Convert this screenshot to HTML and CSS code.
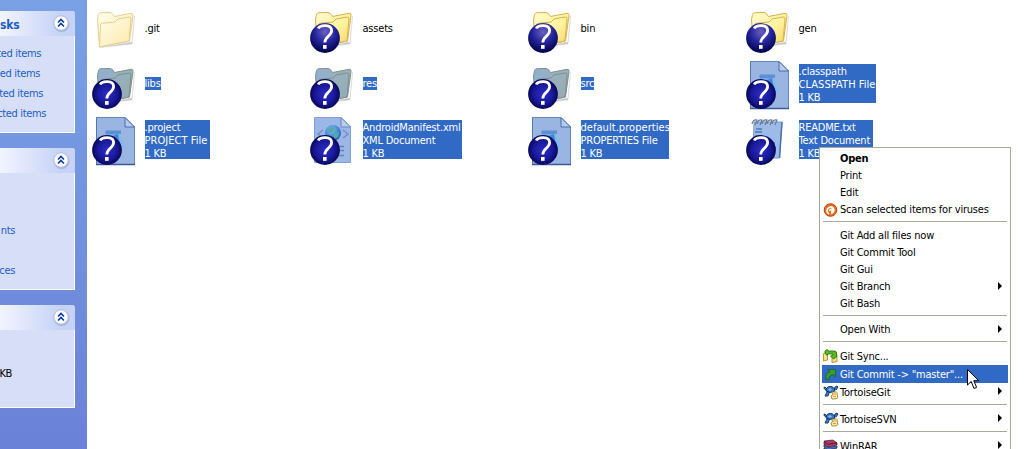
FILE: index.html
```html
<!DOCTYPE html>
<html lang="en">
<head>
<meta charset="utf-8">
<title>Explorer</title>
<link rel="stylesheet" href="styles.css">
</head>
<body>
<svg class="defs" width="0" height="0" aria-hidden="true">
  <defs>
    <linearGradient id="gFold" x1="0" y1="0" x2="1" y2="1"><stop offset="0" stop-color="#fffbd0"/><stop offset=".5" stop-color="#fff3a0"/><stop offset="1" stop-color="#f8d468"/></linearGradient>
    <linearGradient id="gPale" x1="0" y1="0" x2="1" y2="1"><stop offset="0" stop-color="#fffdec"/><stop offset="1" stop-color="#fde9ac"/></linearGradient>
    <linearGradient id="gSel" x1="0" y1="0" x2="1" y2="1"><stop offset="0" stop-color="#8fb0d4"/><stop offset=".5" stop-color="#98b0b8"/><stop offset="1" stop-color="#93a9b2"/></linearGradient>
    <radialGradient id="gBadge" cx=".5" cy=".5" r=".52"><stop offset="0" stop-color="#2c2cc4"/><stop offset=".6" stop-color="#1a1a9c"/><stop offset="1" stop-color="#050553"/></radialGradient>
    <radialGradient id="gBadgeLight" cx=".5" cy=".3" r=".65"><stop offset="0" stop-color="#6a60c0"/><stop offset=".55" stop-color="#24249a"/><stop offset="1" stop-color="#050553"/></radialGradient>
    <radialGradient id="gGlobe" cx=".4" cy=".3" r=".7"><stop offset="0" stop-color="#7cc0ee"/><stop offset="1" stop-color="#2463bd"/></radialGradient>
    <radialGradient id="gBtn" cx=".5" cy=".5" r=".5"><stop offset=".7" stop-color="#fff"/><stop offset="1" stop-color="#e8ecf8"/></radialGradient>
    <g id="mark"><path d="M10.200 28.500C12 24.800 23.600 23.800 23.600 30.500C23.600 36 16.800 36.500 16.800 42.500" fill="none" stroke="#fff" stroke-width="2.800"/><rect x="15" y="45" width="3.600" height="3.800" fill="#fff"/></g>
    <g id="badge"><circle cx="17" cy="38" r="14.900" fill="url(#gBadge)"/><use href="#mark"/></g>
    <g id="badgeLight"><circle cx="17" cy="38" r="14.900" fill="url(#gBadgeLight)"/><use href="#mark"/></g>
    <g id="folderShape">
      <path d="M10 47.500L42 42L44.500 16L42 44Z" fill="#777" stroke="#8886" opacity=".4"/>
      <path d="M7.500 20L8.500 14.500Q9 12.800 11 12.700L20 12.500Q22.500 12.500 24.500 16.500L41 13.300Q43.300 13 43 15.500L39.500 41L9.500 46.800Z"/>
      <path d="M10.500 25.500Q10.500 23.500 12.500 23.300L25 22L28 19L39 17Q41.200 17 41 19L39 41L9.500 46.800Z"/>
    </g>
    <g id="docShape">
      <path d="M6.500 5.500H35L44.500 15V52.500H6.500Z" fill="#9ab5e2" stroke="#6587bd"/>
      <path d="M6.500 52.500V5.500" stroke="#5277ab"/><path d="M6 52.500H45" stroke="#385b98" stroke-width="1.500"/>
      <path d="M35 5.500V15H44.500Z" fill="#b5ccef" stroke="#4a6ca5"/>
      <path d="M15.500 18.500H31V22H15.500Z" fill="#5b90d6"/><path d="M16 22H29L32 35H16Z" fill="#78a8e2"/><path d="M29 21L35 35L31 36L28 24Z" fill="#7cbcee"/><path d="M18 26L28 22L30 34H18Z" fill="#3f85d6"/>
    </g>
    <symbol id="folder" viewBox="0 0 50 56"><use href="#folderShape" fill="url(#gFold)" stroke="#d9b34b"/><use href="#badgeLight"/></symbol>
    <symbol id="folderPlain" viewBox="0 0 50 56"><use href="#folderShape" fill="url(#gPale)" stroke="#e7ce8d"/></symbol>
    <symbol id="folderSel" viewBox="0 0 50 56"><use href="#folderShape" fill="url(#gSel)" stroke="#82908c"/><use href="#badge"/></symbol>
    <symbol id="doc" viewBox="0 0 50 56"><use href="#docShape"/><use href="#badge"/></symbol>
    <symbol id="xml" viewBox="0 0 50 56">
      <path d="M6.500 5.500H33L42.500 15V50.500H6.500Z" fill="#9cb7e7" stroke="#7ea0d9"/><path d="M33 5.500V15H42.500Z" fill="#b8ceef" stroke="#6488c0"/>
      <path d="M15 18L10 22L15 26M35 18L40 22L35 26" fill="none" stroke="#7391c0" stroke-width="1.500"/>
      <circle cx="25" cy="21" r="8" fill="url(#gGlobe)"/><path d="M20 17Q24 13 27 17L24 20Q20 22 20 17M26 21L31 20L30 25L26 27Z" fill="#55a9a3"/>
      <path d="M28 34.500H36M28 38.500H36M28 43.500H36" stroke="#6384b9" stroke-width="1.500"/><use href="#badge"/></symbol>
    <symbol id="txt" viewBox="0 0 50 56">
      <path d="M10 10H38L35.500 46H9Z" fill="#9dbbe9" stroke="#7799cf"/><path d="M38 10L35.500 46" stroke="#4f72a4" stroke-width="1.500"/>
      <path d="M12 17H18M11 20H18M11 24H18M25 31H31M25 36H32M25 41H30" stroke="#527bb5" stroke-width="1.300"/>
      <path d="M8 12Q9 7 13 8L11 13M13 12Q14 7 18 8L16 13M18 12Q19 7 23 8L21 13M23 12Q24 7 28 8L26 13M28 12Q29 7 33 8L31 13" fill="none" stroke="#6a7c95" stroke-width="1.200"/><use href="#badge"/></symbol>
    <symbol id="chev" viewBox="0 0 18 18"><circle cx="9.500" cy="10" r="8" fill="#8795c4" opacity=".5"/><circle cx="9" cy="9" r="7.300" fill="url(#gBtn)" stroke="#b5bdd9"/><path d="M6 8.500L9 5.500L12 8.500M6 12.500L9 9.500L12 12.500" fill="none" stroke="#0a3a9c" stroke-width="1.600"/></symbol>
    <symbol id="tortoise" viewBox="0 0 16 16">
      <path d="M3 6L1.500 5Q0 3 2 3L4 5M4 8L2 12H5L6.500 8M11 6L12 3Q14.500 1 15 3L13 6" fill="#3f78bd" stroke="#143f76"/>
      <path d="M3 7Q3 2.500 7.500 2.500Q11 2.500 12 7Q7 10 3 7Z" fill="#3479c4" stroke="#0b2c5e"/><path d="M5 5.500L7 4L9 5.500L7 7Z" fill="#84bcee"/>
      <path d="M9 8H13.500Q15 8.500 14 10L15 13.500Q14 15.300 9 15L8 12L9.500 11Z" fill="#fbeab0" stroke="#b08d3a"/><path d="M10 10H13M10 12.500H13" stroke="#c8a64c"/>
    </symbol>
  </defs>
</svg>
<div class="explorer">
  <aside class="tasks">
    <section class="panel panel-a">
      <header><b>sks</b><svg class="chev"><use href="#chev"/></svg></header>
      <ul><li class="w1">ted items</li><li class="w2">ed items</li><li class="w3">ted items</li><li class="w4">cted items</li></ul>
    </section>
    <section class="panel panel-b">
      <header><svg class="chev"><use href="#chev"/></svg></header>
      <ul><li></li><li></li><li class="w5">nts</li><li></li><li class="w5">ces</li></ul>
    </section>
    <section class="panel panel-c">
      <header><svg class="chev"><use href="#chev"/></svg></header>
      <ul><li></li><li class="w6">KB</li></ul>
    </section>
  </aside>
  <main class="files">
    <div class="file"><svg><use href="#folderPlain"/></svg><p>.git</p></div>
    <div class="file"><svg><use href="#folder"/></svg><p>assets</p></div>
    <div class="file"><svg><use href="#folder"/></svg><p>bin</p></div>
    <div class="file"><svg><use href="#folder"/></svg><p>gen</p></div>
    <div class="file sel"><svg><use href="#folderSel"/></svg><p>libs</p></div>
    <div class="file sel"><svg><use href="#folderSel"/></svg><p>res</p></div>
    <div class="file sel"><svg><use href="#folderSel"/></svg><p>src</p></div>
    <div class="file sel"><svg><use href="#doc"/></svg><p class="n-class">.classpath<br><span class="caps">CLASSPATH File</span><br>1 KB</p></div>
    <div class="file sel"><svg><use href="#doc"/></svg><p class="n-proj">.project<br><span class="caps">PROJECT File</span><br>1 KB</p></div>
    <div class="file sel"><svg><use href="#xml"/></svg><p class="n-xml">AndroidManifest.xml<br>XML Document<br>1 KB</p></div>
    <div class="file sel"><svg><use href="#doc"/></svg><p class="n-prop"><span class="caps">default.properties</span><br>PROPERTIES File<br>1 KB</p></div>
    <div class="file sel"><svg><use href="#txt"/></svg><p class="n-read">README.txt<br>Text Document<br>1 KB</p></div>
  </main>
  <nav class="menu">
    <div class="item"><b>Open</b></div>
    <div class="item"><span>Print</span></div>
    <div class="item"><span>Edit</span></div>
    <div class="item"><svg viewBox="0 0 16 16"><circle cx="7.500" cy="8" r="6.300" fill="#e8701c" stroke="#b8430c"/><path d="M6 12Q3 10 4.500 7Q7 3.500 10 6Q12 9 9 11V7Q6.500 7 7 9" fill="none" stroke="#fff" stroke-width="1.700"/></svg><span>Scan selected items for viruses</span></div>
    <hr>
    <div class="item"><span>Git Add all files now</span></div>
    <div class="item"><span>Git Commit Tool</span></div>
    <div class="item"><span>Git Gui</span></div>
    <div class="item sub"><span>Git Branch</span></div>
    <div class="item"><span>Git Bash</span></div>
    <hr>
    <div class="item sub"><span>Open With</span></div>
    <hr>
    <div class="item tall"><svg viewBox="0 0 16 16"><path d="M.5 5.500L4.500 5V12L.5 13ZM9 8L14 7V13.500L9 14.500Z" fill="#f7e585" stroke="#b8962e"/><path d="M2 5V3L4 1.500L6 3H12L13.500 4V9L10.500 11L7.500 8L10 7V6H5L4 7.500Z" fill="#5cb81f" stroke="#226d0a" stroke-width=".8"/></svg><span>Git Sync...</span></div>
    <div class="item tall hot"><svg viewBox="0 0 16 16"><path d="M3 13.500Q1.500 8 7 5.500L5 3.500H12.500V11L10.500 8.500Q6 9 5.500 13.500Z" fill="#37a02d" stroke="#17651c" stroke-width=".8"/></svg><span>Git Commit -&gt; "master"...</span></div>
    <div class="item tall sub"><svg><use href="#tortoise"/></svg><span>TortoiseGit</span></div>
    <hr>
    <div class="item tall sub"><svg><use href="#tortoise"/></svg><span>TortoiseSVN</span></div>
    <hr>
    <div class="item tall sub"><svg viewBox="0 0 16 16"><path d="M1 3L10 2L14 5L5 7Z" fill="#a83a6c" stroke="#471030" stroke-width=".7"/><path d="M1 3.500L5 6.500L14 5V7L5 9L1 6Z" fill="#d03a5a" stroke="#31101c" stroke-width=".7"/><path d="M1 6.500L5 9.500L14 8V10L5 12L1 9Z" fill="#4a72d0" stroke="#101c44" stroke-width=".7"/><path d="M1 10L5 12.500L14 11V13L5 15L1 12.500Z" fill="#2c8a3d" stroke="#0c3813" stroke-width=".7"/></svg><span>WinRAR</span></div>
  </nav>
  <svg class="cursor" viewBox="0 0 13 21"><path d="M.5 .5V16L4.200 12.500L7 19.500L9.600 18.400L6.800 11.700H11.700Z" fill="#fff" stroke="#000"/></svg>
</div>
</body>
</html>
```
FILE: styles.css
```css
* { box-sizing: border-box; }
body { margin: 0; font: 11px/13px "DejaVu Sans Condensed", "DejaVu Sans", sans-serif; font-stretch: condensed; letter-spacing: -0.2px; color: #000; background: #fff; }
p, ul { margin: 0; padding: 0; list-style: none; }
.defs { position: absolute; }
.explorer { position: relative; display: flex; width: 1028px; height: 449px; overflow: hidden; }
.tasks { width: 87px; height: 449px; padding-top: 11px; background: linear-gradient(#7aa1e6, #6a82d8); overflow: hidden; letter-spacing: -0.35px; }
.panel { width: 75px; border: solid #fff; border-width: 0 1px 1px 0; border-radius: 0 4px 0 0; background: #d6dff7; color: #215dc6; margin-bottom: 15px; }
.panel-a { height: 122px; }
.panel-b { height: 142px; }
.panel-c { height: 103px; color: #000; }
.panel header { display: flex; align-items: center; width: 75px; height: 25px; border-radius: 0 3px 0 0; background: linear-gradient(90deg, #f2f5ff, #c6d3f7 80%); }
.panel header b { padding-top: 3px; font-size: 12px; letter-spacing: -0.2px; }
.chev { width: 18px; height: 18px; margin: -2px 5px 0 auto; }
.panel ul { padding-top: 7px; }
.panel li { display: flex; justify-content: flex-end; align-items: center; height: 20px; white-space: nowrap; }
.panel-c ul { padding-top: 13px; }
.w1 { width: 41px; } .w2 { width: 40px; } .w3 { width: 43px; } .w4 { width: 46px; } .w5 { width: 15px; } .w6 { width: 12px; }
.files { display: grid; grid-template-columns: repeat(4, 218px); grid-auto-rows: 56px; align-content: start; }
.file { display: flex; align-items: center; gap: 5px; height: 56px; padding-left: 3px; white-space: nowrap; }
.file svg { flex: none; width: 50px; height: 56px; }
.file p { margin: 0 0 0 -0.5px; padding-top: 1px; height: 14px; }
.file.sel p { height: 13px; margin-bottom: 1px; padding: 0; line-height: 14px; background: #316ac5; color: #fff; }
.file.sel p[class] { height: 39px; padding-top: 1px; line-height: 13px; }
.caps { letter-spacing: 0.05px; }
.n-class { width: 77px; } .n-proj { width: 65px; } .n-xml { width: 99px; } .n-prop { width: 88px; } .n-read { width: 74px; }
.menu { position: absolute; left: 819px; top: 147px; width: 192px; height: 320px; padding: 2px; border: 1px solid #aca899; background: #fff; }
.item { position: relative; display: grid; grid-template-columns: 18px 1fr; align-items: center; height: 17px; white-space: nowrap; }
.item b, .item span { grid-column: 2; grid-row: 1; }
.item svg { width: 16px; height: 16px; margin-left: 1px; }
.tall { height: 18px; }
.hot { background: #316ac5; color: #fff; }
.sub::after { content: ""; position: absolute; right: 6px; top: 4px; border: solid transparent; border-width: 4px 0 4px 4px; border-left-color: #000; }
.menu hr { height: 9px; margin: 0 1px; border: 0; background: linear-gradient(#aca899, #aca899) 0 3px / 100% 1px no-repeat; }
.cursor { position: absolute; left: 967px; top: 369px; width: 13px; height: 21px; }
```
